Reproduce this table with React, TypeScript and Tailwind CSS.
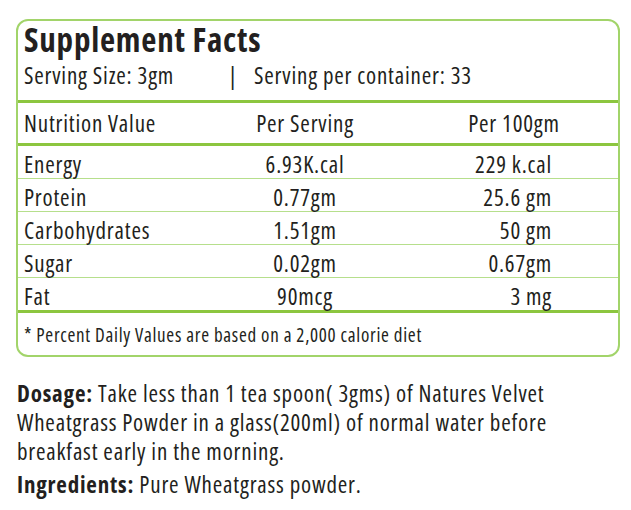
const rows = [
  { name: 'Energy', serving: '6.93K.cal', per100: '229 k.cal' },
  { name: 'Protein', serving: '0.77gm', per100: '25.6 gm' },
  { name: 'Carbohydrates', serving: '1.51gm', per100: '50 gm' },
  { name: 'Sugar', serving: '0.02gm', per100: '0.67gm' },
  { name: 'Fat', serving: '90mcg', per100: '3 mg' },
]

function FactsTable() {
  return (
    <div className="rounded-[12px] border-2 border-[#a2d46a]">
      <div className="px-[6px] pt-[1px] pb-[11px]">
        <h1 className="text-[33px] leading-[36px] font-bold tracking-[0.8px]">Supplement Facts</h1>
        <p className="mt-[3px] flex text-[23px] leading-[28px] tracking-[0.8px]">
          <span className="w-[204px]">Serving Size: 3gm</span>
          <span>|</span>
          <span className="ml-[16px]">Serving per container: 33</span>
        </p>
      </div>

      <div className="grid grid-cols-[182px_210px_1fr] border-y-[3px] border-[#8cc63f] pt-[6px] pb-[6px] text-[23px] leading-[28px] tracking-[0.8px]">
        <span className="pl-[6px]">Nutrition Value</span>
        <span className="text-center">Per Serving</span>
        <span className="text-center">Per 100gm</span>
      </div>

      {rows.map((r, i) => (
        <div
          key={r.name}
          className={
            i < rows.length - 1
              ? 'grid grid-cols-[182px_210px_1fr] border-b border-[#b6df8c] pt-[4px] h-[33px] text-[23px] leading-[28px] tracking-[0.8px]'
              : 'grid grid-cols-[182px_210px_1fr] border-b-[3px] border-[#8cc63f] pt-[4px] h-[35px] text-[23px] leading-[28px] tracking-[0.8px]'
          }
        >
          <span className="pl-[6px]">{r.name}</span>
          <span className="text-center">{r.serving}</span>
          <span className="text-right pr-[66px]">{r.per100}</span>
        </div>
      ))}

      <p className="px-[6px] pt-[10px] pb-[8px] text-[19px] leading-[24px] tracking-[0.7px]">
        * Percent Daily Values are based on a 2,000 calorie diet
      </p>
    </div>
  )
}

export default function App() {
  return (
    <div
      className="w-[631px] h-[510px] bg-white text-[#231f20] font-stretch-condensed"
      style={{ fontFamily: '"Open Sans", "Liberation Sans", sans-serif' }}
    >
      <div className="pl-[16px] pr-[11px] pt-[19px]">
        <FactsTable />
      </div>

      <div className="px-[17px] pt-[22px] text-[23px] leading-[29px] tracking-[0.8px]">
        <p className="max-w-[560px]">
          <span className="font-bold">Dosage:</span> Take less than 1 tea spoon( 3gms) of Natures Velvet
          Wheatgrass Powder in a glass(200ml) of normal water before breakfast early in the morning.
        </p>
        <p className="mt-[4px]">
          <span className="font-bold">Ingredients:</span> Pure Wheatgrass powder.
        </p>
      </div>
    </div>
  )
}
